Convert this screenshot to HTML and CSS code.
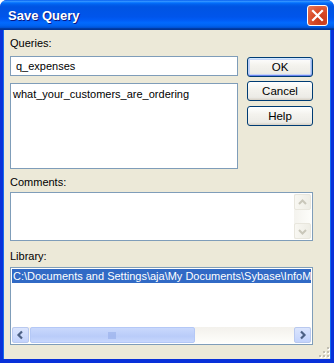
FILE: index.html
```html
<!DOCTYPE html>
<html>
<head>
<meta charset="utf-8">
<link rel="stylesheet" href="styles.css">
</head>
<body>
<div class="window">
  <div class="titlebar">
    <span class="title">Save Query</span>
    <span class="close"><svg width="21" height="21" viewBox="0 0 21 21"><path d="M6 6 L15 15 M15 6 L6 15" stroke="#fff" stroke-width="2.2" stroke-linecap="square"/></svg></span>
  </div>
  <div class="client">
    <div class="top">
      <div class="left">
        <div class="label">Queries:</div>
        <div class="input">q_expenses</div>
        <div class="listbox queries"><div class="item">what_your_customers_are_ordering</div></div>
      </div>
      <div class="buttons">
        <div class="btn default">OK</div>
        <div class="btn cancel">Cancel</div>
        <div class="btn help">Help</div>
      </div>
    </div>
    <div class="label comments-label">Comments:</div>
    <div class="textarea">
      <div class="vscroll">
        <div class="sbtn disabled"><svg width="15" height="15" viewBox="0 0 15 15"><path d="M4 9 L7.5 5.5 L11 9" fill="none" stroke="#c9c7ba" stroke-width="2"/></svg></div>
        <div class="vtrack"></div>
        <div class="sbtn disabled"><svg width="15" height="15" viewBox="0 0 15 15"><path d="M4 6 L7.5 9.5 L11 6" fill="none" stroke="#c9c7ba" stroke-width="2"/></svg></div>
      </div>
    </div>
    <div class="label library-label">Library:</div>
    <div class="listbox library">
      <div class="rows"><div class="item selected">C:\Documents and Settings\aja\My Documents\Sybase\InfoM</div></div>
      <div class="hscroll">
        <div class="sbtn"><svg width="15" height="14" viewBox="0 0 15 14"><path d="M9 3.5 L5.5 7 L9 10.5" fill="none" stroke="#4d6185" stroke-width="2.2"/></svg></div>
        <div class="thumb"><svg width="9" height="7" viewBox="0 0 9 7"><path d="M1 0v7M3 0v7M5 0v7M7 0v7" stroke="#8ea7e6" stroke-width="1"/></svg></div>
        <div class="htrack"></div>
        <div class="sbtn"><svg width="15" height="14" viewBox="0 0 15 14"><path d="M6 3.5 L9.5 7 L6 10.5" fill="none" stroke="#4d6185" stroke-width="2.2"/></svg></div>
      </div>
    </div>
    <div class="grip"><svg width="12" height="12" viewBox="0 0 12 12">
      <g fill="#fff"><rect x="10" y="2" width="2" height="2"/><rect x="6" y="6" width="2" height="2"/><rect x="10" y="6" width="2" height="2"/><rect x="2" y="10" width="2" height="2"/><rect x="6" y="10" width="2" height="2"/><rect x="10" y="10" width="2" height="2"/></g>
      <g fill="#c2bfb2"><rect x="9" y="1" width="2" height="2"/><rect x="5" y="5" width="2" height="2"/><rect x="9" y="5" width="2" height="2"/><rect x="1" y="9" width="2" height="2"/><rect x="5" y="9" width="2" height="2"/><rect x="9" y="9" width="2" height="2"/></g>
    </svg></div>
  </div>
</div>
</body>
</html>
```
FILE: styles.css
```css
* { box-sizing: border-box; }
html, body { margin: 0; padding: 0; background: #fff; }
body { font-family: "Liberation Sans", Arial, sans-serif; font-size: 11px; color: #000; }

.window {
  width: 334px;
  height: 363px;
  display: flex;
  flex-direction: column;
  background: #0831d9;
  border-radius: 7px 7px 0 0;
  overflow: hidden;
}

.titlebar {
  height: 30px;
  flex: none;
  display: flex;
  align-items: center;
  justify-content: space-between;
  padding: 0 6px 0 8px;
  background: linear-gradient(to bottom, #0058ee 0%, #3593ff 4%, #288eff 6%, #127dff 8%, #036ffc 10%, #0262ee 14%, #0057e5 20%, #0054e3 24%, #0055eb 56%, #005bf5 66%, #026afe 76%, #0062ef 86%, #0052d6 92%, #0040ab 94%, #003092 100%);
}

.title {
  color: #fff;
  font-family: "Liberation Sans", Arial, sans-serif;
  font-weight: bold;
  font-size: 13px;
  text-shadow: 1px 1px 0 #0a1883;
  margin-top: 1px;
}

.close {
  width: 21px;
  height: 21px;
  border: 1px solid #fff;
  border-radius: 3px;
  background: radial-gradient(circle at 70% 75%, #c5381a 0%, #d94a26 45%, #e87a5c 100%);
  display: flex;
  align-items: center;
  justify-content: center;
  margin-top: 1px;
}
.close svg { display: block; margin: -1px; }

.client {
  position: relative;
  flex: 1;
  margin: 0 4px 4px 4px;
  background: #ece9d8;
  padding: 7px 17px 0 6px;
  display: flex;
  flex-direction: column;
  box-shadow: -1px 0 0 #166aee, 1px 0 0 #166aee;
}

.top { display: flex; }
.left { width: 228px; display: flex; flex-direction: column; }

.label { height: 13px; line-height: 13px; }

.input {
  margin-top: 6px;
  height: 20px;
  border: 1px solid #7f9db9;
  background: #fff;
  padding: 0 5px;
  line-height: 18px;
}

.listbox {
  border: 1px solid #7f9db9;
  background: #fff;
  padding: 1px;
}
.queries { margin-top: 7px; height: 86px; }
.item { height: 14px; line-height: 14px; padding-left: 1px; white-space: nowrap; overflow: hidden; }
.queries .item { margin-top: 2px; }

.buttons {
  display: flex;
  flex-direction: column;
  margin-left: 9px;
  padding-top: 20px;
}
.btn {
  width: 66px;
  height: 20px;
  border: 1px solid #003c74;
  border-radius: 3px;
  background: linear-gradient(to bottom, #ffffff 0%, #f4f3ee 40%, #ecebe6 85%, #d6d0c5 100%);
  text-align: center;
  line-height: 18px;
  font-size: 11.5px;
}
.btn.cancel { margin-top: 4px; }
.btn.help { margin-top: 5px; }
.btn.default {
  box-shadow: inset 0 1px 0 #cee7ff, inset 0 -1px 0 #6982ee, inset 1px 0 0 #bccdf4, inset -1px 0 0 #98b4ec, inset 0 0 0 2px #c4d4f7;
}

.comments-label { margin-top: 7px; }
.textarea {
  margin-top: 3px;
  height: 49px;
  width: 303px;
  border: 1px solid #7f9db9;
  background: #fff;
  padding: 1px;
  display: flex;
  justify-content: flex-end;
}
.vscroll {
  width: 17px;
  display: flex;
  flex-direction: column;
  background: linear-gradient(to right, #f4f3ee, #fdfdfa);
}
.vtrack { flex: 1; }

.sbtn {
  width: 17px;
  height: 16px;
  border: 1px solid #b9c9ef;
  border-radius: 2px;
  background: linear-gradient(to bottom, #dbe5fd, #c3d3fc);
  display: flex;
  align-items: center;
  justify-content: center;
}
.sbtn.disabled {
  border-color: #e8e6dd;
  background: linear-gradient(to right, #f8f7f2, #eeede5);
}

.library-label { margin-top: 9px; }
.library {
  margin-top: 4px;
  height: 78px;
  width: 303px;
  display: flex;
  flex-direction: column;
}
.rows { flex: 1; }
.item.selected { background: #316ac5; color: #fff; }

.hscroll {
  height: 16px;
  display: flex;
  background: linear-gradient(to bottom, #f3f1ec, #fefefb);
}
.thumb {
  width: 165px;
  margin-left: 1px;
  border: 1px solid #b4c8f6;
  border-radius: 2px;
  background: linear-gradient(to bottom, #c9d8fc, #b9ccf9 60%, #c8d7fd);
  display: flex;
  align-items: center;
  justify-content: center;
}
.thumb svg { display: block; }
.htrack { flex: 1; }

.grip {
  position: absolute;
  right: 0;
  bottom: 1px;
  width: 12px;
  height: 12px;
}
.grip svg { display: block; }
```
